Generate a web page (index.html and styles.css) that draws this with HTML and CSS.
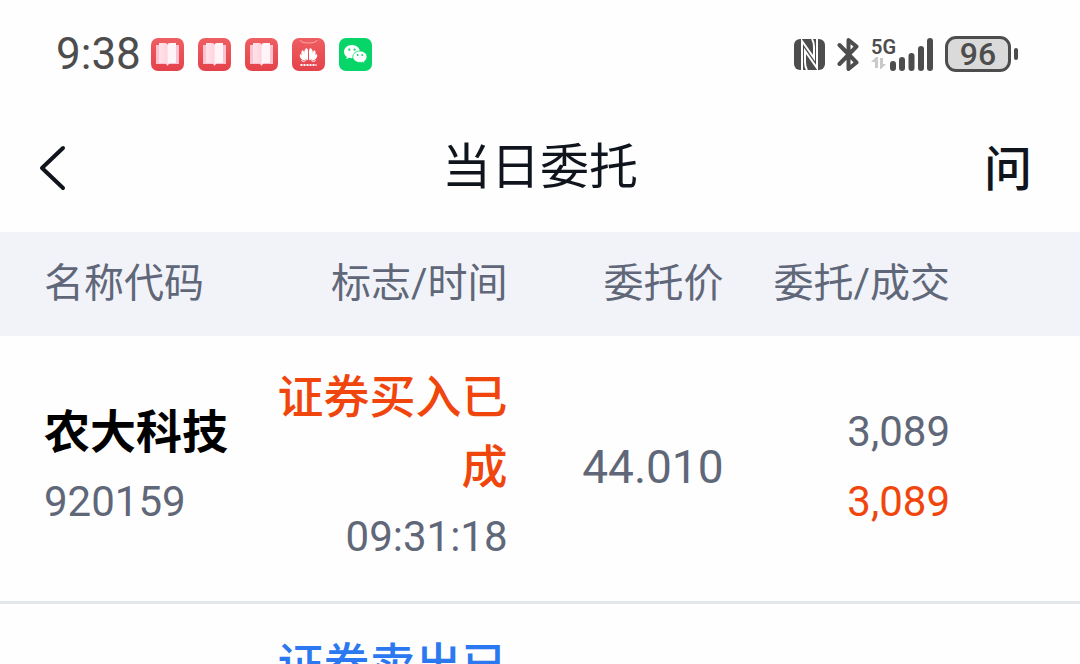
FILE: index.html
```
<!DOCTYPE html>
<html lang="zh-CN">
<head>
  <meta charset="utf-8">
  <meta name="viewport" content="width=device-width, initial-scale=1">
  <title>当日委托</title>
  <link rel="stylesheet" href="styles.css">
</head>
<body>

<svg width="0" height="0" class="defs" aria-hidden="true">
  <defs>
    <linearGradient id="red" x1="0" y1="0" x2="0" y2="1">
      <stop offset="0" stop-color="#ee5f62"/>
      <stop offset="1" stop-color="#e4424a"/>
    </linearGradient>
    <linearGradient id="page" x1="0" y1="0" x2="1" y2="0">
      <stop offset="0" stop-color="#ffe3ea"/>
      <stop offset="1" stop-color="#ffd3de"/>
    </linearGradient>
    <symbol id="book" viewBox="0 0 33 33">
      <rect width="33" height="33" rx="7" fill="url(#red)"/>
      <path d="M5 7h23v19H18l-1.500 2-1.500-2H5z" fill="#fbc3cf"/>
      <path d="M8 5h6q2.500 0 2.500 1.500V27q-1-2-3-2H8z" fill="url(#page)"/>
      <path d="M25 5h-6q-2.500 0-2.500 1.500V27q1-2 3-2H25z" fill="#fff5f8"/>
    </symbol>
  </defs>
</svg>

<div class="status">
  <span class="clock">9:38</span>
  <div class="apps">
    <svg class="app"><use href="#book"/></svg>
    <svg class="app"><use href="#book"/></svg>
    <svg class="app"><use href="#book"/></svg>
    <svg class="app" viewBox="0 0 33 33">
      <rect width="33" height="33" rx="7" fill="url(#red)"/>
      <path d="M8 2q1 3 8.500 3T25 2" fill="none" stroke="#f9a9ac" stroke-width="1"/>
      <g fill="#fff">
        <path d="M16 22.500C11.500 18 11 12 14.500 10q1.500.5 1.500 3z"/>
        <path d="M17 22.500C21.500 18 22 12 18.500 10q-1.500.5-1.500 3z"/>
        <path d="M15 22.500C9.500 19.500 8 15 10.500 12q3 2 4.500 10.500z"/>
        <path d="M18 22.500C23.500 19.500 25 15 22.500 12q-3 2-4.500 10.500z"/>
        <path d="M14 22.800C9.500 22.500 7 19.500 8 16q3.500 1.500 6 6.800z"/>
        <path d="M19 22.800C23.500 22.500 26 19.500 25 16q-3.500 1.500-6 6.800z"/>
        <path d="M13.500 23.500c-2 .8-4 .2-4.500-1.500z"/>
        <path d="M19.500 23.500c2 .8 4 .2 4.500-1.500z"/>
      </g>
      <path d="M8.500 27h16" stroke="#fff" stroke-width="2" stroke-dasharray="2 1"/>
    </svg>
    <svg class="app" viewBox="0 0 33 33">
      <rect width="33" height="33" rx="7" fill="#07d568"/>
      <path d="M13 7c-4.500 0-8 2.900-8 6.700 0 2.100 1.100 4 2.900 5.200l-.7 2.300 2.800-1.400c1 .3 2 .4 3 .4 4.500 0 8-2.900 8-6.500S17.500 7 13 7z" fill="#fff"/>
      <path d="M21 13c-4 0-7.200 2.500-7.200 5.800s3.200 5.700 7.200 5.700c.9 0 1.700-.1 2.500-.3l2.300 1.200-.6-2c1.700-1.100 2.800-2.700 2.800-4.600 0-3.300-3-5.800-7-5.800z" fill="#fff" stroke="#07d568" stroke-width=".8"/>
      <g fill="#07d568">
        <circle cx="10.300" cy="11.700" r="1.100"/>
        <circle cx="15.600" cy="11.700" r="1.100"/>
        <circle cx="18.700" cy="17" r=".9"/>
        <circle cx="23.200" cy="17" r=".9"/>
      </g>
    </svg>
  </div>

  <div class="indicators">
    <svg width="31" height="33" viewBox="0 0 31 33">
      <rect y="1" width="31" height="31" rx="6" fill="#4d4d4d"/>
      <path d="M8 33V3l12 17V9q0-5-2-8M23 0v30L11 13v11q0 5 2 8" fill="none" stroke="#fff" stroke-width="2"/>
    </svg>
    <svg width="23" height="35" viewBox="0 0 23 35" class="bluetooth">
      <path d="M2.500 8l17 17.500-8 6.500V3l8 6.500L2.500 27" fill="none" stroke="#4d4d4d" stroke-width="4" stroke-linecap="round" stroke-linejoin="round"/>
    </svg>
    <div class="signal">
      <div class="network">
        <span>5G</span>
        <svg width="16" height="12" viewBox="0 0 16 12">
          <path d="M0 5l5-5h2v11H4V5zM15 7l-5 5H9V1h3v6z" fill="#c9c9c9"/>
        </svg>
      </div>
      <svg width="44" height="35" viewBox="0 0 44 35" class="bars">
        <path d="M3 27v4M12 23v8M21.500 19v12M31 12v19M40 4v27" stroke="#4d4d4d" stroke-width="6" stroke-linecap="round"/>
      </svg>
    </div>
    <div class="battery">
      <span class="level">96</span>
      <span class="tip"></span>
    </div>
  </div>
</div>

<header class="nav">
  <button type="button" class="back" aria-label="返回">
    <svg width="28" height="48" viewBox="0 0 28 48">
      <path d="M25 4L4 24l21 20" fill="none" stroke="#10141d" stroke-width="4" stroke-linecap="round" stroke-linejoin="round"/>
    </svg>
  </button>
  <h1>当日委托</h1>
  <button type="button" class="ask">问</button>
</header>

<main>
  <table class="orders">
    <colgroup>
      <col class="c-name">
      <col class="c-flag">
      <col class="c-price">
      <col class="c-amount">
    </colgroup>
    <thead>
      <tr>
        <th>名称代码</th>
        <th>标志/时间</th>
        <th>委托价</th>
        <th>委托/成交</th>
      </tr>
    </thead>
    <tbody>
      <tr>
        <td>
          <div class="name">农大科技</div>
          <div class="num">920159</div>
        </td>
        <td>
          <div class="flag buy">证券买入已成</div>
          <div class="num">09:31:18</div>
        </td>
        <td class="price">44.010</td>
        <td>
          <div class="num">3,089</div>
          <div class="num buy">3,089</div>
        </td>
      </tr>
      <tr>
        <td></td>
        <td><div class="flag sell">证券卖出已</div></td>
        <td></td>
        <td></td>
      </tr>
    </tbody>
  </table>
</main>

</body>
</html>
```

FILE: styles.css
```
* {
  box-sizing: border-box;
}

body {
  margin: 0;
  height: 100vh;
  display: flex;
  flex-direction: column;
  overflow: hidden;
  background: #fefefe;
  color: #606778;
  font-family: Roboto, "Noto Sans CJK SC", sans-serif;
}

.defs {
  position: absolute;
}

/* status bar */
.status {
  display: flex;
  align-items: center;
  flex-shrink: 0;
  height: 104px;
  padding: 4px 62px 0 56px;
  color: #4d4d4d;
}

.clock {
  font-size: 44px;
  line-height: 48px;
}

.apps {
  display: flex;
  gap: 14px;
  margin-left: 10px;
}

.app {
  width: 33px;
  height: 33px;
}

.indicators {
  display: flex;
  align-items: center;
  margin-left: auto;
}

.bluetooth {
  margin: 0 11px 0 12px;
}

.signal {
  display: flex;
}

.network {
  display: flex;
  flex-direction: column;
  width: 19px;
  font-size: 20px;
  font-weight: 600;
  line-height: 20px;
  white-space: nowrap;
}

.battery {
  display: flex;
  align-items: center;
  gap: 3px;
  margin-left: 11px;
}

.level {
  width: 66px;
  height: 36px;
  border: 3px solid #4d4d4d;
  border-radius: 11px;
  background: #dadada;
  font-size: 32px;
  font-weight: 500;
  line-height: 30px;
  text-align: center;
}

.tip {
  width: 4px;
  height: 12px;
  border-radius: 2px;
  background: #4d4d4d;
}

/* title bar */
.nav {
  display: flex;
  align-items: center;
  justify-content: space-between;
  flex-shrink: 0;
  height: 128px;
  padding: 0 38px;
  color: #10141d;
}

.nav h1 {
  margin: 0;
  font-size: 49px;
  font-weight: 400;
  line-height: 72px;
}

.nav button {
  display: flex;
  align-items: center;
  width: 60px;
  padding: 0;
  border: 0;
  background: none;
  color: inherit;
  cursor: pointer;
}

.nav .ask {
  justify-content: flex-end;
  padding: 0 10px 6px 0;
  font: 500 48px/72px "Noto Sans CJK SC", sans-serif;
}

/* order list */
main {
  flex: 1;
  min-height: 0;
  overflow: hidden;
}

.orders {
  width: 100%;
  table-layout: fixed;
  border-collapse: separate;
  border-spacing: 0;
}

.c-name {
  width: 24%;
}

.c-flag {
  width: 23%;
}

.c-price {
  width: 20%;
}

.c-amount {
  width: 33%;
}

th {
  height: 104px;
  padding: 0;
  background: #f2f3f8;
  font-size: 40px;
  font-weight: 400;
  line-height: 60px;
  text-align: right;
  white-space: nowrap;
}

td {
  padding: 26px 0 29px;
  border-bottom: 3px solid #e4e7ea;
  line-height: 70px;
  text-align: right;
}

th:first-child,
td:first-child {
  padding-left: 44px;
  text-align: left;
}

th:last-child,
td:last-child {
  padding-right: 130px;
}

.name {
  color: #000;
  font-size: 46px;
  font-weight: 700;
}

.flag {
  font-size: 46px;
  font-weight: 500;
}

.num {
  font-size: 42px;
}

.price {
  font-size: 46px;
}

.buy {
  color: #f0460e;
}

.sell {
  color: #2b78f0;
}
```
